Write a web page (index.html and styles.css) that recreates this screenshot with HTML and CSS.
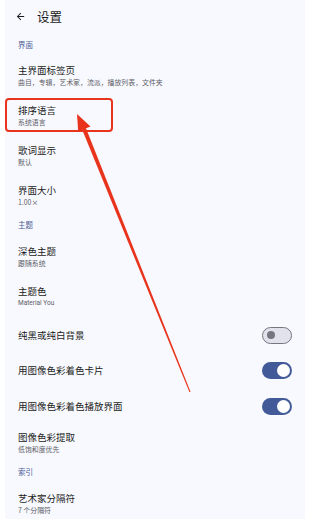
FILE: index.html
```html
<!DOCTYPE html>
<html lang="zh">
<head>
<meta charset="utf-8">
<link rel="stylesheet" href="styles.css">
</head>
<body>
<div class="screen">
  <header class="topbar">
    <svg class="back" viewBox="0 0 24 24" width="11" height="11"><path d="M20 11H7.83l5.59-5.59L12 4l-8 8 8 8 1.41-1.41L7.83 13H20v-2z" fill="#1a1b20"/></svg>
    <span class="title">设置</span>
  </header>
  <div class="section first">界面</div>
  <div class="item"><div class="t">主界面标签页</div><div class="s">曲目，专辑，艺术家，流派，播放列表，文件夹</div></div>
  <div class="item"><div class="t">排序语言</div><div class="s">系统语言</div></div>
  <div class="item"><div class="t">歌词显示</div><div class="s">默认</div></div>
  <div class="item"><div class="t">界面大小</div><div class="s">1.00×</div></div>
  <div class="section">主题</div>
  <div class="item"><div class="t">深色主题</div><div class="s">跟随系统</div></div>
  <div class="item"><div class="t">主题色</div><div class="s latin">Material You</div></div>
  <div class="row short"><div class="t">纯黑或纯白背景</div><span class="switch off"><span class="knob"></span></span></div>
  <div class="row"><div class="t">用图像色彩着色卡片</div><span class="switch on"><span class="knob"></span></span></div>
  <div class="row"><div class="t">用图像色彩着色播放界面</div><span class="switch on"><span class="knob"></span></span></div>
  <div class="item"><div class="t">图像色彩提取</div><div class="s">低饱和度优先</div></div>
  <div class="section">索引</div>
  <div class="item"><div class="t">艺术家分隔符</div><div class="s">7 个分隔符</div></div>

  <div class="highlight"></div>
  <svg class="arrow" viewBox="0 0 308 527" width="308" height="527">
    <polygon points="85.9,128.1 82.1,129.6 189.5,392.2 190.5,391.8" fill="#e8341c"/>
    <polygon points="77,114 90.5,126.5 78.2,131.5" fill="#e8341c"/>
  </svg>
</div>
</body>
</html>
```
FILE: styles.css
```css
html, body {
  margin: 0;
  padding: 0;
  background: #ffffff;
}
body {
  font-family: "Noto Sans CJK SC", "Noto Sans", Roboto, sans-serif;
  color: #1a1b20;
}
.screen {
  position: relative;
  margin-left: 5px;
  width: 300px;
  height: 519px;
  background: #f8f9ff;
  overflow: hidden;
}
.topbar {
  height: 33px;
  display: flex;
  align-items: center;
  padding-left: 10px;
  box-sizing: border-box;
}
.back {
  display: block;
  margin-right: 11px;
}
.title {
  font-size: 12.5px;
  line-height: 16px;
  color: #1a1b20;
}
.section {
  font-size: 7.5px;
  line-height: 12px;
  color: #4a5c96;
  padding: 2px 13px 7px;
  height: 12px;
}
.section.first {
  padding: 6px 13px 6px;
}
.item {
  height: 40px;
  box-sizing: border-box;
  padding: 6px 13px 0;
}
.t {
  font-size: 9.5px;
  line-height: 14px;
  color: #1a1b20;
  white-space: nowrap;
}
.s {
  font-size: 6.9px;
  line-height: 10px;
  color: #5d5e66;
  white-space: nowrap;
}
.s.latin {
  font-family: Roboto, "Noto Sans CJK SC", sans-serif;
  font-size: 6.5px;
}
.row {
  height: 36px;
  box-sizing: border-box;
  padding: 0 13px;
  display: flex;
  align-items: center;
  justify-content: space-between;
}
.row.short {
  height: 34px;
}
.switch {
  position: relative;
  width: 30px;
  height: 17px;
  border-radius: 9px;
  box-sizing: border-box;
  display: block;
}
.switch.off {
  background: #e1e2ec;
  border: 1.5px solid #75777f;
}
.switch.on {
  background: #425a98;
}
.knob {
  position: absolute;
  border-radius: 50%;
}
.switch.off .knob {
  width: 8px;
  height: 8px;
  left: 4px;
  top: 3px;
  background: #75777f;
}
.switch.on .knob {
  width: 13px;
  height: 13px;
  right: 2px;
  top: 2px;
  background: #ffffff;
}
.highlight {
  position: absolute;
  left: 0;
  top: 98px;
  width: 108px;
  height: 34px;
  box-sizing: border-box;
  border: 2px solid #e8341c;
  border-radius: 4px;
}
.arrow {
  position: absolute;
  left: -5px;
  top: 0;
  pointer-events: none;
}
```
